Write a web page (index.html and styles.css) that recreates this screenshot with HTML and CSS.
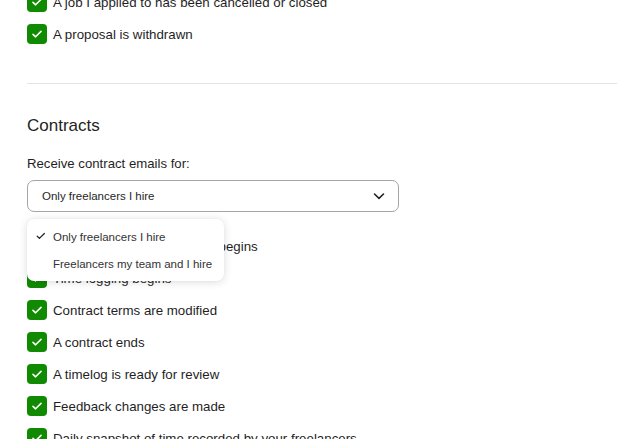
FILE: index.html
```html
<!DOCTYPE html>
<html>
<head>
<meta charset="utf-8">
<link rel="stylesheet" href="styles.css">
</head>
<body>
<div class="page">
  <div class="list list-top">
    <div class="row"><span class="cb"><svg viewBox="0 0 20 20"><path d="M6 10.3l2.6 2.5L14 7.4"/></svg></span><span class="txt">A job I applied to has been cancelled or closed</span></div>
    <div class="row"><span class="cb"><svg viewBox="0 0 20 20"><path d="M6 10.3l2.6 2.5L14 7.4"/></svg></span><span class="txt">A proposal is withdrawn</span></div>
  </div>
  <hr class="divider">
  <section class="section">
    <h2 class="heading">Contracts</h2>
    <div class="label">Receive contract emails for:</div>
    <div class="select-wrap">
      <div class="select">
        <span class="select-value">Only freelancers I hire</span>
        <svg class="chev" viewBox="0 0 14 14"><path d="M2.5 5l4.5 4.3L11.5 5"/></svg>
      </div>
      <div class="menu">
        <div class="menu-item selected"><svg class="tick" viewBox="0 0 12 12"><path d="M1.5 6.3l2.6 2.5L10 3"/></svg>Only freelancers I hire</div>
        <div class="menu-item">Freelancers my team and I hire</div>
      </div>
    </div>
    <div class="list list-contracts">
      <div class="row"><span class="cb"><svg viewBox="0 0 20 20"><path d="M6 10.3l2.6 2.5L14 7.4"/></svg></span><span class="txt">A hire is made or a contract begins</span></div>
      <div class="row"><span class="cb"><svg viewBox="0 0 20 20"><path d="M6 10.3l2.6 2.5L14 7.4"/></svg></span><span class="txt">Time logging begins</span></div>
      <div class="row"><span class="cb"><svg viewBox="0 0 20 20"><path d="M6 10.3l2.6 2.5L14 7.4"/></svg></span><span class="txt">Contract terms are modified</span></div>
      <div class="row"><span class="cb"><svg viewBox="0 0 20 20"><path d="M6 10.3l2.6 2.5L14 7.4"/></svg></span><span class="txt">A contract ends</span></div>
      <div class="row"><span class="cb"><svg viewBox="0 0 20 20"><path d="M6 10.3l2.6 2.5L14 7.4"/></svg></span><span class="txt">A timelog is ready for review</span></div>
      <div class="row"><span class="cb"><svg viewBox="0 0 20 20"><path d="M6 10.3l2.6 2.5L14 7.4"/></svg></span><span class="txt">Feedback changes are made</span></div>
      <div class="row"><span class="cb"><svg viewBox="0 0 20 20"><path d="M6 10.3l2.6 2.5L14 7.4"/></svg></span><span class="txt">Daily snapshot of time recorded by your freelancers</span></div>
    </div>
  </section>
</div>
</body>
</html>
```
FILE: styles.css
```css
html, body {
  margin: 0;
  padding: 0;
  background: #fff;
  overflow: hidden;
}
body {
  font-family: "Liberation Sans", Arial, sans-serif;
  color: #1f1f1f;
  width: 617px;
  height: 439px;
}
.page {
  padding-left: 27px;
}
.list {
  display: flex;
  flex-direction: column;
}
.list-top {
  margin-top: -14px;
}
.row {
  display: flex;
  align-items: center;
  height: 32px;
  gap: 6px;
}
.cb {
  width: 20px;
  height: 20px;
  border-radius: 4px;
  background: #108a00;
  display: flex;
  flex-shrink: 0;
}
.cb svg {
  width: 20px;
  height: 20px;
  fill: none;
  stroke: #fff;
  stroke-width: 1.6;
  stroke-linecap: round;
  stroke-linejoin: round;
}
.txt {
  font-size: 13.3px;
  white-space: nowrap;
}
.divider {
  border: 0;
  border-top: 1px solid #e4e4e4;
  margin: 33px 0 0 0;
}
.section {
  padding-top: 30px;
}
.heading {
  font-size: 17px;
  font-weight: 400;
  line-height: 24px;
  margin: 0;
}
.label {
  margin-top: 16px;
  font-size: 13.2px;
  line-height: 20px;
}
.select-wrap {
  position: relative;
  margin-top: 6px;
}
.select {
  box-sizing: border-box;
  width: 372px;
  height: 32px;
  border: 1px solid #a5a5a5;
  border-radius: 7px;
  display: flex;
  align-items: center;
  justify-content: space-between;
  padding: 0 12px 0 14px;
}
.select-value {
  font-size: 11.5px;
}
.chev {
  width: 14px;
  height: 14px;
  fill: none;
  stroke: #222;
  stroke-width: 1.6;
  stroke-linecap: round;
  stroke-linejoin: round;
}
.menu {
  position: absolute;
  left: 0;
  top: 39px;
  width: 197px;
  box-sizing: border-box;
  padding: 4px 0;
  background: #fff;
  border-radius: 7px;
  box-shadow: 0 1px 8px rgba(0,0,0,0.14), 0 0 1px rgba(0,0,0,0.08);
  z-index: 2;
}
.menu-item {
  position: relative;
  height: 27px;
  display: flex;
  align-items: center;
  padding-left: 26px;
  font-size: 11.5px;
  white-space: nowrap;
  color: #333;
}
.tick {
  position: absolute;
  left: 9px;
  top: 8px;
  width: 10px;
  height: 10px;
  fill: none;
  stroke: #222;
  stroke-width: 1.5;
  stroke-linecap: round;
  stroke-linejoin: round;
}
.list-contracts {
  margin-top: 18px;
}
```
